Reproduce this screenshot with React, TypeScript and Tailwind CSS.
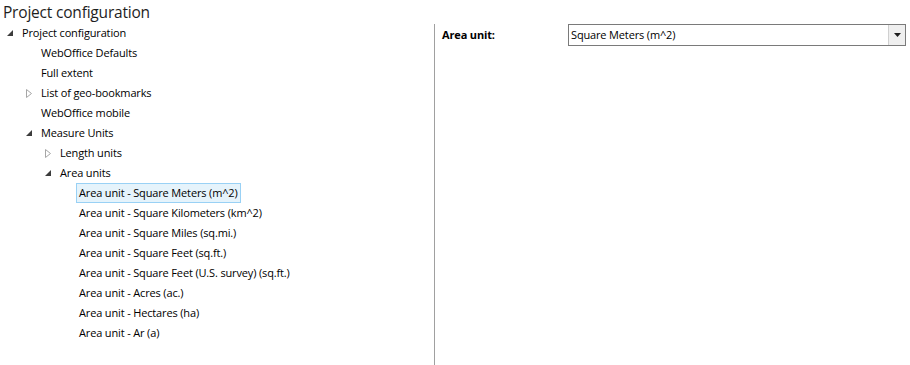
import React from "react";

type Node = { label: string; level: number; toggle?: "open" | "closed"; selected?: boolean };

const nodes: Node[] = [
  { label: "Project configuration", level: 0, toggle: "open" },
  { label: "WebOffice Defaults", level: 1 },
  { label: "Full extent", level: 1 },
  { label: "List of geo-bookmarks", level: 1, toggle: "closed" },
  { label: "WebOffice mobile", level: 1 },
  { label: "Measure Units", level: 1, toggle: "open" },
  { label: "Length units", level: 2, toggle: "closed" },
  { label: "Area units", level: 2, toggle: "open" },
  { label: "Area unit - Square Meters (m^2)", level: 3, selected: true },
  { label: "Area unit - Square Kilometers (km^2)", level: 3 },
  { label: "Area unit - Square Miles (sq.mi.)", level: 3 },
  { label: "Area unit - Square Feet (sq.ft.)", level: 3 },
  { label: "Area unit - Square Feet (U.S. survey) (sq.ft.)", level: 3 },
  { label: "Area unit - Acres (ac.)", level: 3 },
  { label: "Area unit - Hectares (ha)", level: 3 },
  { label: "Area unit - Ar (a)", level: 3 },
];

const indents = ["pl-[3px]", "pl-[22px]", "pl-[41px]", "pl-[76px]"];

function Toggle({ kind }: { kind?: "open" | "closed" }) {
  return (
    <span className="w-[16px] h-[20px] flex items-center justify-start pl-[4px] shrink-0">
      {kind === "open" && (
        <svg width="6" height="6" viewBox="0 0 6 6">
          <polygon points="6,0 6,6 0,6" fill="#3c3c3c" />
        </svg>
      )}
      {kind === "closed" && (
        <svg width="6" height="9" viewBox="0 0 6 9">
          <polygon points="0.5,0.5 5.5,4.5 0.5,8.5" fill="white" stroke="#a6a6a6" strokeWidth="1" />
        </svg>
      )}
    </span>
  );
}

export default function App() {
  return (
    <div
      className="w-[910px] h-[365px] bg-white text-black overflow-hidden flex flex-col"
      style={{ fontFamily: '"Open Sans", "Noto Sans", sans-serif' }}
    >
      <div className="h-[24px] pl-[3px] text-[15.5px] leading-[24px] text-[#1e1e1e] tracking-[-0.2px]">Project configuration</div>
      <div className="flex flex-1 min-h-0">
        <div className="w-[435px] shrink-0 border-r border-[#a0a0a0]">
          <div className="-mt-[1px]">
            {nodes.map((n, i) => (
              <div key={i} className={`flex items-center h-[20px] ${indents[n.level]}`}>
                {n.level < 3 ? <Toggle kind={n.toggle} /> : null}
                <span
                  className={
                    n.level === 3
                      ? `h-[20px] leading-[18px] px-[2px] border text-[11px] whitespace-nowrap tracking-[-0.15px] ${
                          n.selected ? "bg-[#e5f3fb] border-[#99d1f5]" : "border-transparent"
                        }`
                      : "h-[20px] leading-[20px] pl-[3px] text-[11px] whitespace-nowrap tracking-[-0.15px]"
                  }
                >
                  {n.label}
                </span>
              </div>
            ))}
          </div>
        </div>
        <div className="flex-1 pl-[7px] pr-[4px]">
          <div className="flex items-center h-[22px]">
            <div className="w-[126px] font-bold text-[11px] tracking-[-0.15px]">Area unit:</div>
            <div className="flex-1 h-[22px] border border-[#7a7a7a] flex items-stretch">
              <div className="flex-1 pl-[2px] text-[11px] leading-[20px] tracking-[-0.15px]">Square Meters (m^2)</div>
              <div className="w-[17px] bg-[#efefef] border-l border-[#d0d0d0] flex items-center justify-center">
                <svg width="7" height="4" viewBox="0 0 7 4">
                  <polygon points="0,0 7,0 3.5,4" fill="#1e1e1e" />
                </svg>
              </div>
            </div>
          </div>
        </div>
      </div>
    </div>
  );
}
